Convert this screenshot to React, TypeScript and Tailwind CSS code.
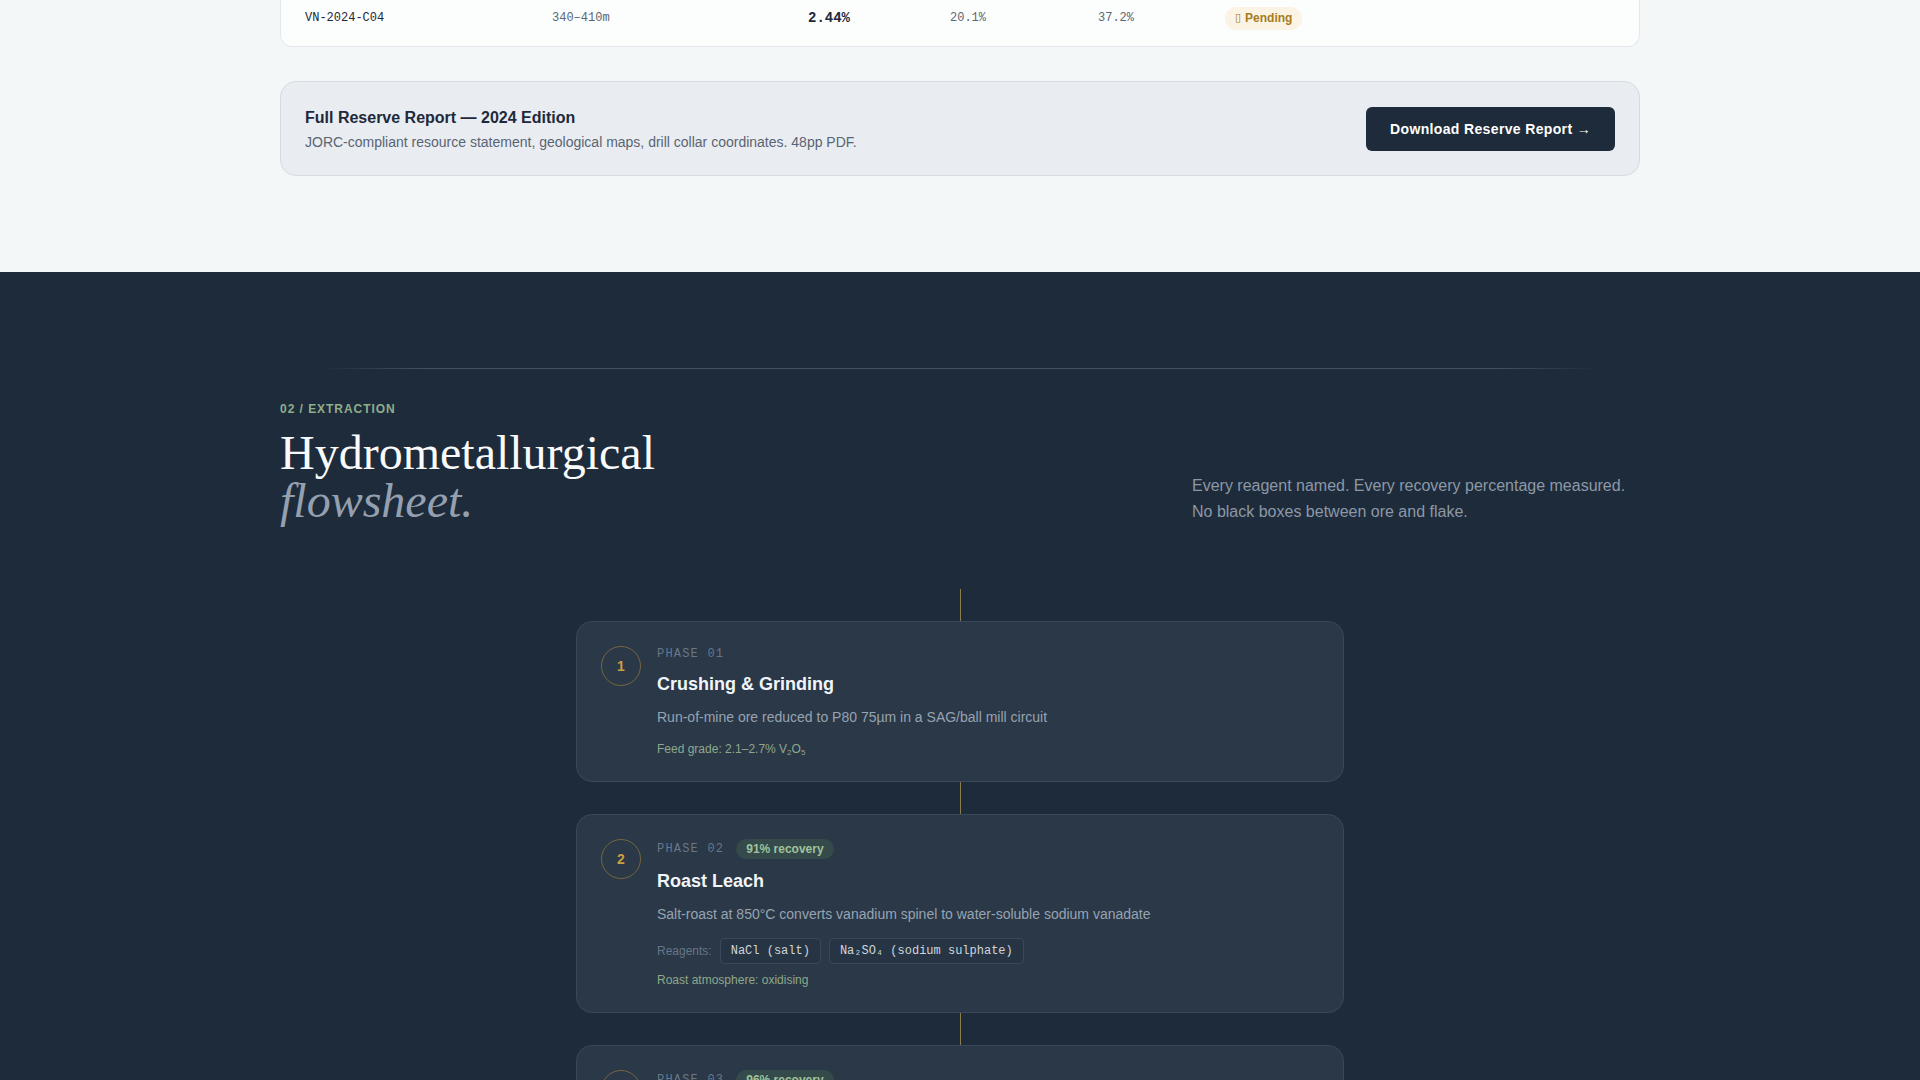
import React from "react";

type Phase = {
  n: number;
  label: string;
  recovery?: string;
  title: string;
  desc: string;
  reagents?: React.ReactNode[];
  note: React.ReactNode;
};

const phases: Phase[] = [
  {
    n: 1,
    label: "PHASE 01",
    title: "Crushing & Grinding",
    desc: "Run-of-mine ore reduced to P80 75µm in a SAG/ball mill circuit",
    note: (
      <>
        Feed grade: 2.1–2.7% V<sub className="text-[8px]">2</sub>O<sub className="text-[8px]">5</sub>
      </>
    ),
  },
  {
    n: 2,
    label: "PHASE 02",
    recovery: "91% recovery",
    title: "Roast Leach",
    desc: "Salt-roast at 850°C converts vanadium spinel to water-soluble sodium vanadate",
    reagents: ["NaCl (salt)", "Na₂SO₄ (sodium sulphate)"],
    note: "Roast atmosphere: oxidising",
  },
  {
    n: 3,
    label: "PHASE 03",
    recovery: "96% recovery",
    title: "Water Leach & Precipitation",
    desc: "Calcine leached in hot water; ammonium metavanadate precipitated from pregnant solution",
    reagents: ["NH₄Cl (ammonium chloride)", "H₂SO₄ (sulphuric acid)"],
    note: "Leach temperature: 80°C",
  },
];

function PhaseCard({ p }: { p: Phase }) {
  return (
    <div className="flex w-full gap-4 rounded-2xl border border-[#3a4959] bg-[#2a3847] p-6">
      <div className="flex h-10 w-10 shrink-0 items-center justify-center rounded-full border border-[#75663f] text-sm font-bold text-[#c9a03f]">
        {p.n}
      </div>
      <div className="flex flex-col">
        <div className="flex items-center gap-3">
          <span className="font-['Liberation_Mono',monospace] text-xs leading-4 tracking-widest text-[#687789]">
            {p.label}
          </span>
          {p.recovery && (
            <span className="rounded-full bg-[#354a4b] px-2.5 py-0.5 text-xs leading-4 font-bold text-[#9fc29b]">
              {p.recovery}
            </span>
          )}
        </div>
        <h3 className="mt-2 text-lg leading-7 font-bold text-[#f1f5f9]">{p.title}</h3>
        <p className="mt-2 text-sm leading-[23px] text-[#97a3b2]">{p.desc}</p>
        {p.reagents && (
          <div className="mt-3 flex items-center gap-2">
            <span className="text-xs text-[#66768a]">Reagents:</span>
            {p.reagents.map((r, i) => (
              <span
                key={i}
                className="rounded border border-[#3a4959] bg-[#263443] px-2.5 py-1 font-['Liberation_Mono',monospace] text-xs leading-4 text-[#cfd6de]"
              >
                {r}
              </span>
            ))}
          </div>
        )}
        <div className={`${p.reagents ? "mt-2" : "mt-3"} text-xs leading-4 text-[#8fa88b]`}>{p.note}</div>
      </div>
    </div>
  );
}

export default function App() {
  return (
    <div className="min-h-screen bg-[#1e2b3a] font-['Liberation_Sans',Arial,sans-serif]">
      <section className="bg-[#f4f7f7] pb-24">
        <div className="mx-auto max-w-[1360px]">
          <div className="rounded-b-xl border-x border-b border-[#e3e8ec] bg-[#fcfdfd] px-6 pt-[6px] pb-4">
            <div className="grid h-6 grid-cols-[247px_256px_142px_148px_127px_1fr] items-center font-['Liberation_Mono',monospace] text-xs">
              <span className="text-[#1f2937]">VN-2024-C04</span>
              <span className="text-[#5b6675]">340–410m</span>
              <span className="text-sm font-bold text-[#1e293b]">2.44%</span>
              <span className="text-[#5b6675]">20.1%</span>
              <span className="text-[#5b6675]">37.2%</span>
              <span className="flex">
                <span className="inline-flex h-[23px] items-center gap-1 rounded-full bg-[#fbf3e3] px-2.5 font-['Liberation_Sans',Arial,sans-serif] text-xs leading-4 font-bold text-[#a77b1e]">
                  <span className="font-['DejaVu_Sans',sans-serif] text-[11px] leading-4">▯</span>Pending
                </span>
              </span>
            </div>
          </div>

          <div className="mt-[34px] flex h-[95px] items-center justify-between rounded-2xl border border-[#d5dbe1] bg-[#e9edf1] px-6">
            <div>
              <h4 className="text-base leading-6 font-bold text-[#1e293b]">Full Reserve Report — 2024 Edition</h4>
              <p className="mt-0.5 text-sm leading-5 text-[#5a6473]">
                JORC-compliant resource statement, geological maps, drill collar coordinates. 48pp PDF.
              </p>
            </div>
            <button className="flex h-11 items-center rounded-md bg-[#1e2b3a] px-6 text-sm leading-5 font-bold tracking-wide text-white">
              Download Reserve Report →
            </button>
          </div>
        </div>
      </section>

      <section className="pt-24 pb-24">
        <div className="mx-auto h-px max-w-7xl bg-[linear-gradient(to_right,transparent,#415063_8%,#415063_92%,transparent)]" />
        <div className="mx-auto mt-8 flex max-w-[1360px] items-end justify-between">
          <div>
            <div className="text-xs leading-4 font-bold tracking-[0.08em] text-[#8fae8b]">02 / EXTRACTION</div>
            <h2 className="mt-3 font-['Liberation_Serif','Times_New_Roman',serif] text-5xl leading-none font-normal text-[#f8fafc]">
              Hydrometallurgical
              <span className="block italic text-[#94a0b0]">flowsheet.</span>
            </h2>
          </div>
          <p className="w-md text-base leading-[26px] text-[#8c98a7]">
            Every reagent named. Every recovery percentage measured. No black boxes between ore and flake.
          </p>
        </div>

        <div className="mx-auto mt-16 flex max-w-3xl flex-col items-center">
          {phases.map((p) => (
            <React.Fragment key={p.n}>
              <div className="h-8 w-px bg-[#8c7c4e]" />
              <PhaseCard p={p} />
            </React.Fragment>
          ))}
        </div>
      </section>
    </div>
  );
}
